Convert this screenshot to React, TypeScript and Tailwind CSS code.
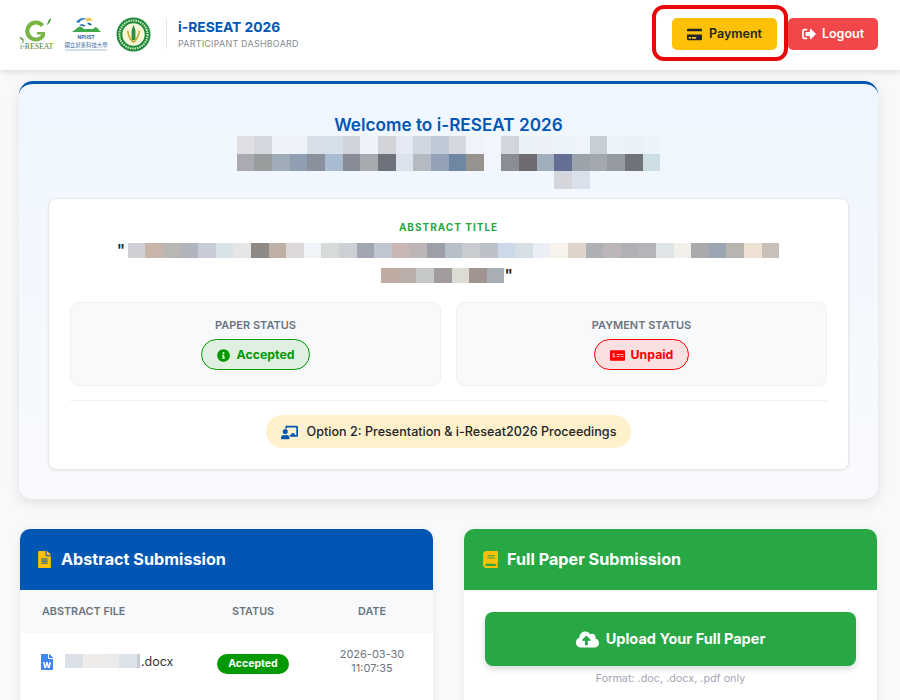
import { FaCreditCard, FaSignOutAlt, FaInfoCircle, FaMoneyCheckAlt, FaChalkboardTeacher, FaFileAlt, FaBook, FaCloudUploadAlt, FaFileWord } from "react-icons/fa";

// blurred-out personal data in the screenshot, kept as colour cells
const nameRows = [
  ["#e0dfe4", "#d2d8de", "#eef3fa", "#edf1f8", "#d9dfe8", "#d6e0ea", "#ced4da", "#eef2f9", "#d2d4da", "#e4e9f3", "#d1d7e0", "#bfc9d7", "#d5d8df", "#eff4fb", "#f1f6fe", "#d0d6dc", "#ebf1f8", "#ecf1f7", "#edf3fa", "#eff4fb", "#c8ced6", "#ecf2f9", "#ebf1f9", "#edf3fb"],
  ["#a9aab2", "#989c9c", "#9fabb6", "#8f9eb1", "#8a909c", "#a9bbd0", "#878c96", "#a7abb0", "#6d727c", "#dce2ec", "#b5b9c2", "#93a1b6", "#6f87a2", "#98928e", "#f1f6fe", "#8a8d94", "#6f6a70", "#a1aebc", "#656f95", "#9da3ab", "#a3a8b0", "#959aa1", "#71737b", "#cddfe5"],
];
const nameTail = ["#d5d6dc", "#dbe1ec"];
const titleLine = ["#ced0d5", "#c7b5a9", "#b9b7b3", "#b0b4bc", "#c8ccd9", "#d8e3e8", "#e6e6e6", "#8e8985", "#bfb0a5", "#dcd8d9", "#f0f3f8", "#d6dbd8", "#ccd0d4", "#a2a6b2", "#bfc6d2", "#c8b7b5", "#bcb7b6", "#9d9fa8", "#b7bfc9", "#c8cbd0", "#bcc1c9", "#ccd9e8", "#d7dfe6", "#ebeef6", "#f8f3ea", "#dfd4ca", "#aeb0b4", "#bcb5b9", "#b0b1b5", "#b3b5b9", "#dfe4e6", "#f3efea", "#aaa9ac", "#9aa7b3", "#b8b5b1", "#eee0d3", "#c8c0b8"];
const titleTail = ["#bfaba1", "#bbaea9", "#c4c8c6", "#a39c9c", "#dcdcd4", "#a29490", "#a9adb5"];
const fileCells = ["#dbe0e7", "#efebe9", "#ecebe9", "#dde3ea"];

function Cells({ colors, className }: { colors: string[]; className: string }) {
  return (
    <div className="flex">
      {colors.map((c, i) => (
        <div key={i} className={className} style={{ backgroundColor: c }} />
      ))}
    </div>
  );
}

function Logos() {
  return (
    <div className="flex items-center">
      <svg width="36" height="32" viewBox="0 0 36 32" className="mr-[8px]">
        <path d="M25 6.5 A10.5 10.5 0 1 0 26 18 L26 14 L18 14 L18 16.5 L22.5 16.5 A6.5 6.5 0 1 1 22 9 Z" fill="#78b545" />
        <path d="M28 7 Q29 2 32 0 Q32 4 28 7 Z" fill="#3f8f2f" />
        <path d="M4 21 Q2 19.5 1 19.5 Q2 22 4 22 M4 21 L4 25" stroke="#5b9a35" strokeWidth="1" fill="none" />
        <text x="1" y="31" fontFamily="Liberation Serif, serif" fontSize="7.8" fill="#4e7f3a">i-RESEAT</text>
      </svg>
      <svg width="46" height="36" viewBox="0 0 46 36" className="mr-[7px]">
        <path d="M13 6 Q18 0 24 3 Q18 3 16 7 Z" fill="#2f80c8" />
        <path d="M23 3 Q28 0 30 5 Q27 3 24 6 Z" fill="#f2c230" />
        <path d="M13 13 Q17 8 21 13 L30 13 Q33 9 36 14 L38 16 L9 16 Z" fill="#3ea84a" />
        <path d="M16 9 Q20 7 23 10 Q20 11 16 9 M24 7 Q27 6 29 9 Q26 10 24 7" fill="#1f5fa8" />
        <text x="23" y="23" textAnchor="middle" fontFamily="Liberation Sans, sans-serif" fontSize="5" fontWeight="700" fill="#2b5fa0">NPUST</text>
        <text x="23" y="31" textAnchor="middle" fontFamily="Noto Sans CJK TC, sans-serif" fontSize="5.4" fill="#3a6aa6">國立屏東科技大學</text>
        <rect x="2" y="33.5" width="42" height="1" fill="#a9bdd6" />
      </svg>
      <svg width="35" height="35" viewBox="0 0 36 36">
        <circle cx="18" cy="18" r="17.5" fill="#1f8a3c" />
        <circle cx="18" cy="18" r="14.5" fill="none" stroke="#dcebc8" strokeWidth="2" strokeDasharray="1.5 1" />
        <circle cx="18" cy="18" r="11.5" fill="#f7f6d8" />
        <path d="M18 8 L20 14 L20 24 L16 24 L16 14 Z" fill="#2e8f45" />
        <path d="M12 14 Q13 22 18 26 Q23 22 24 14" stroke="#c9a92e" strokeWidth="1.6" fill="none" />
      </svg>
    </div>
  );
}

function StatusBox({ label, children }: { label: string; children: React.ReactNode }) {
  return (
    <div className="flex h-[84px] flex-col items-center rounded-[8px] border border-[#f0f1f3] bg-[#f8f9fb] pt-[15px]">
      <div className="text-[11px] leading-[14px] font-semibold text-[#6c757d]">{label}</div>
      {children}
    </div>
  );
}

export default function App() {
  return (
    <div className="relative h-[700px] overflow-hidden bg-[#f8f9fb] [font-family:Inter,sans-serif]">
      <header className="flex h-[70px] items-center justify-between bg-white pr-[22px] pb-[2px] pl-[19px] shadow-[0_2px_6px_rgba(0,0,0,0.12)]">
        <div className="flex items-center">
          <Logos />
          <div className="mr-[11px] ml-[15px] h-[30px] w-px bg-[#e3e5e8]" />
          <div className="-mt-px">
            <div className="text-[13.8px] leading-[18px] font-bold text-[#0056b3]">i-RESEAT 2026</div>
            <div className="mt-[2px] text-[9px] leading-[12px] tracking-[0.2px] text-[#868c96]">PARTICIPANT DASHBOARD</div>
          </div>
        </div>
        <div className="flex items-center gap-[11px]">
          <button className="flex h-[32px] w-[105px] items-center justify-center gap-[7px] rounded-[5px] bg-[#ffc107] text-[12.5px] font-semibold text-[#212529]">
            <FaCreditCard className="text-[15px]" />
            Payment
          </button>
          <button className="flex h-[32px] w-[90px] items-center justify-center gap-[6px] rounded-[5px] bg-[#f1474b] text-[12.5px] font-semibold text-white">
            <FaSignOutAlt className="text-[14px]" />
            Logout
          </button>
        </div>
      </header>

      {/* annotation around the payment button */}
      <div className="absolute top-[5px] left-[652px] h-[56px] w-[136px] rounded-[12px] border-[4.5px] border-[#e80808]" />

      <main className="pt-[11px] pr-[22px] pl-[19px]">
        <section className="rounded-[14px] border-t-[3px] border-[#0056b3] bg-gradient-to-b from-[#eff6ff] to-[#f9fafc] px-[29px] pt-[31px] pb-[29px] shadow-[0_4px_14px_rgba(0,0,0,0.1)]">
          <h1 className="text-center text-[17.2px] leading-[20px] font-semibold text-[#0056b3]">Welcome to i-RESEAT 2026</h1>
          <div className="mt-[1px] flex flex-col items-center">
            {nameRows.map((row, i) => (
              <Cells key={i} colors={row} className="h-[17.7px] w-[17.67px]" />
            ))}
            <div className="ml-[247px]">
              <Cells colors={nameTail} className="h-[17.7px] w-[17.67px]" />
            </div>
          </div>

          <div className="mt-[9px] h-[272px] rounded-[8px] border border-[#e5e7eb] bg-white px-[21px] pt-[22px] shadow-[0_1px_3px_rgba(0,0,0,0.06)]">
            <div className="text-center text-[10px] leading-[13px] font-bold tracking-[1px] text-[#28a745]">ABSTRACT TITLE</div>
            <div className="mt-[9px] flex flex-col items-center">
              <div className="flex items-center text-[16px] leading-[15px] font-semibold text-[#212529]">
                <span className="w-[11px]">"</span>
                <Cells colors={titleLine} className="h-[15px] w-[17.62px]" />
                <span className="w-[1px]" />
              </div>
              <div className="mt-[10px] flex items-center pr-[3px] text-[16px] leading-[15px] font-semibold text-[#212529]">
                <Cells colors={titleTail} className="h-[15px] w-[17.6px]" />
                <span>"</span>
              </div>
            </div>

            <div className="mt-[19px] grid grid-cols-2 gap-[15px]">
              <StatusBox label="PAPER STATUS">
                <div className="mt-[7px] flex h-[31px] w-[109px] items-center justify-center gap-[7px] rounded-full border border-[#009900] bg-[#e0f0e0] pt-px text-[12.3px] font-bold text-[#009900]">
                  <FaInfoCircle className="text-[13px]" />
                  Accepted
                </div>
              </StatusBox>
              <StatusBox label="PAYMENT STATUS">
                <div className="mt-[7px] flex h-[31px] w-[95px] items-center justify-center gap-[6px] rounded-full border border-[#ff0000] bg-[#fae0e0] pt-px text-[12.3px] font-bold text-[#ff0000]">
                  <FaMoneyCheckAlt className="text-[15px]" />
                  Unpaid
                </div>
              </StatusBox>
            </div>

            <div className="mt-[14px] border-t border-[#eff0f2]" />
            <div className="mt-[14px] flex justify-center">
              <div className="flex h-[33px] w-[365px] items-center justify-center gap-[9px] rounded-full bg-[#fff1cc] pt-px text-[12.6px] font-medium text-[#212529]">
                <FaChalkboardTeacher className="text-[17px] text-[#0056b3]" />
                Option 2: Presentation &amp; i-Reseat2026 Proceedings
              </div>
            </div>
          </div>
        </section>

        <div className="mx-px mt-[30px] grid grid-cols-2 gap-[31px]">
          <section className="h-[260px] overflow-hidden rounded-[10px] bg-white shadow-[0_2px_8px_rgba(0,0,0,0.08)]">
            <div className="flex h-[61px] items-center gap-[8px] bg-[#0056b3] pb-px pl-[16px]">
              <FaFileAlt className="text-[17px] text-[#ffc107]" />
              <h2 className="text-[16.2px] font-bold text-white">Abstract Submission</h2>
            </div>
            <div className="grid h-[43px] grid-cols-[175px_116px_122px] items-center bg-[#f8f9fb] pt-px text-[10.8px] font-semibold text-[#6c757d]">
              <div className="pl-[22px]">ABSTRACT FILE</div>
              <div className="text-center">STATUS</div>
              <div className="text-center">DATE</div>
            </div>
            <div className="grid h-[58px] grid-cols-[175px_116px_122px] items-center">
              <div className="flex items-center pl-[19px]">
                <FaFileWord className="text-[16px] text-[#4285f4]" />
                <div className="ml-[10px] flex items-center text-[12.5px] text-[#343a40]">
                  <Cells colors={fileCells} className="mb-[3px] h-[14px] w-[18px]" />
                  <Cells colors={["#c5ccd6"]} className="mb-[3px] h-[14px] w-[3px]" />
                  <span className="ml-px">.docx</span>
                </div>
              </div>
              <div className="mt-[4px] flex justify-center">
                <div className="flex h-[20px] w-[72px] items-center justify-center rounded-full bg-[#009900] text-[10.5px] font-bold text-white">Accepted</div>
              </div>
              <div className="pb-[2px] text-center text-[11px] leading-[14px] text-[#6c757d]">
                <div>2026-03-30</div>
                <div>11:07:35</div>
              </div>
            </div>
          </section>

          <section className="h-[260px] overflow-hidden rounded-[10px] bg-white shadow-[0_2px_8px_rgba(0,0,0,0.08)]">
            <div className="flex h-[61px] items-center gap-[8px] bg-[#28a745] pb-px pl-[18px]">
              <FaBook className="text-[17px] text-[#ffc107]" />
              <h2 className="text-[16.2px] font-bold text-white">Full Paper Submission</h2>
            </div>
            <div className="px-[21px] pt-[22px]">
              <button className="flex h-[54px] w-full items-center justify-center gap-[7px] rounded-[8px] bg-[#28a745] text-[14.5px] font-bold text-white shadow-[0_3px_6px_rgba(0,0,0,0.15)]">
                <FaCloudUploadAlt className="text-[23px]" />
                Upload Your Full Paper
              </button>
              <div className="mt-[6px] text-center text-[10.8px] leading-[14px] text-[#a3a7b5]">Format: .doc, .docx, .pdf only</div>
            </div>
          </section>
        </div>
      </main>
    </div>
  );
}
